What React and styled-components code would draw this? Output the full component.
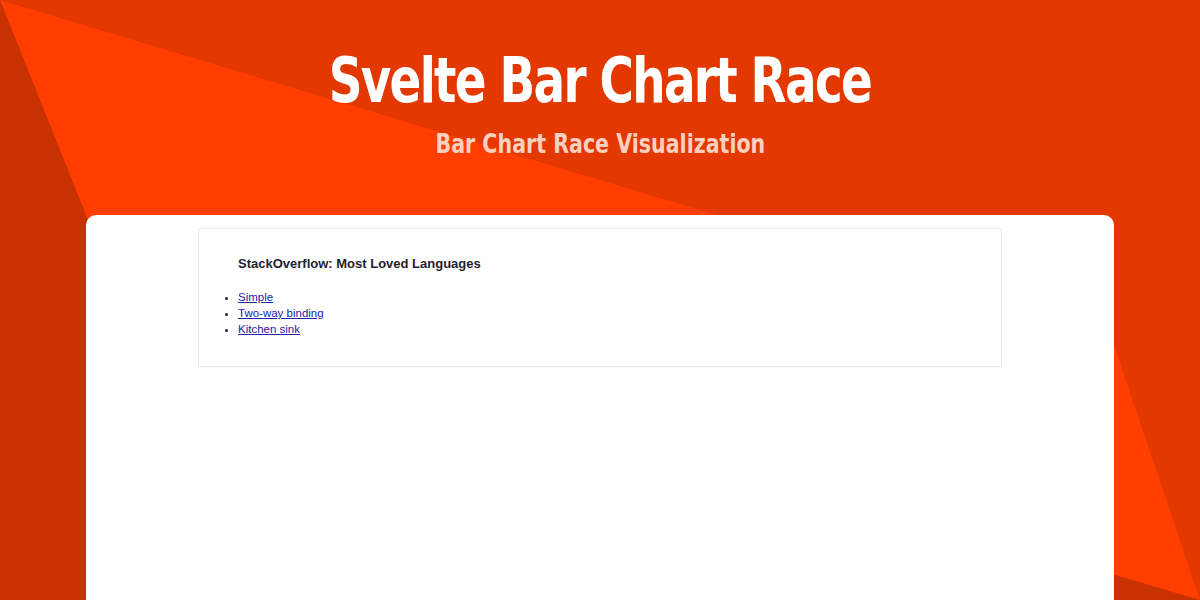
import React from "react";
import styled, { createGlobalStyle } from "styled-components";

const GlobalStyle = createGlobalStyle`
  html, body {
    margin: 0;
    padding: 0;
    background-color: #e33800;
    font-family: "Liberation Sans", Arial, sans-serif;
  }
`;

const Page = styled.div`
  position: relative;
  min-height: 600px;
  overflow: hidden;
`;

const Backdrop = styled.svg`
  position: absolute;
  top: 0;
  left: 0;
  width: 100%;
  height: 600px;
  z-index: 0;
`;

const Content = styled.div`
  position: relative;
  z-index: 1;
  display: flex;
  flex-direction: column;
`;

const Header = styled.header`
  height: 215px;
  display: flex;
  flex-direction: column;
  align-items: center;
  box-sizing: border-box;
  padding-top: 45px;
  font-family: "DejaVu Sans Condensed", "Liberation Sans Narrow", Roboto, sans-serif;
  font-weight: 700;
`;

const Title = styled.h1`
  margin: 0;
  color: #ffffff;
  font-size: 62px;
  line-height: 72px;
  font-weight: 700;
  letter-spacing: -2px;
  transform: scaleX(0.84);
`;

const Subtitle = styled.h2`
  margin: 11px 0 0;
  color: #fcd0c0;
  font-size: 26px;
  line-height: 32px;
  font-weight: 700;
  transform: scaleX(0.88);
`;

const Card = styled.main`
  margin: 0 86px;
  background: #ffffff;
  border-radius: 10px 10px 0 0;
  min-height: 400px;
  padding-top: 13px;
  display: flex;
  justify-content: center;
  align-items: flex-start;
`;

const Panel = styled.section`
  width: 804px;
  box-sizing: border-box;
  border: 1px solid #ececec;
  border-bottom-color: #e2e2e2;
  padding: 27px 39px 29px;
`;

const PanelTitle = styled.h3`
  margin: 0 0 17px;
  font-size: 13px;
  line-height: 16px;
  font-weight: 700;
  color: #1f2230;
`;

const LinkList = styled.ul`
  margin: 0;
  padding: 0;
  font-size: 11.5px;
  line-height: 16px;
`;

const LinkItem = styled.li`
  color: #1f2230;
`;

const DemoLink = styled.a`
  color: #2222aa;
  text-decoration: underline;
`;

const demos = ["Simple", "Two-way binding", "Kitchen sink"];

export default function App() {
  return (
    <>
      <GlobalStyle />
      <Page>
        <Backdrop viewBox="0 0 1200 600" preserveAspectRatio="none">
          <rect x="0" y="0" width="1200" height="600" fill="#e33800" />
          <polygon points="0,0 1110,333 1200,600 240,600" fill="#ff3e00" />
          <polygon points="0,0 240,600 0,600" fill="#c83100" />
          <polygon points="1000,541 1200,600 1000,600" fill="#c83100" />
        </Backdrop>
        <Content>
          <Header>
            <Title>Svelte Bar Chart Race</Title>
            <Subtitle>Bar Chart Race Visualization</Subtitle>
          </Header>
          <Card>
            <Panel>
              <PanelTitle>StackOverflow: Most Loved Languages</PanelTitle>
              <LinkList>
                {demos.map(name => (
                  <LinkItem key={name}>
                    <DemoLink href="#">{name}</DemoLink>
                  </LinkItem>
                ))}
              </LinkList>
            </Panel>
          </Card>
        </Content>
      </Page>
    </>
  );
}
